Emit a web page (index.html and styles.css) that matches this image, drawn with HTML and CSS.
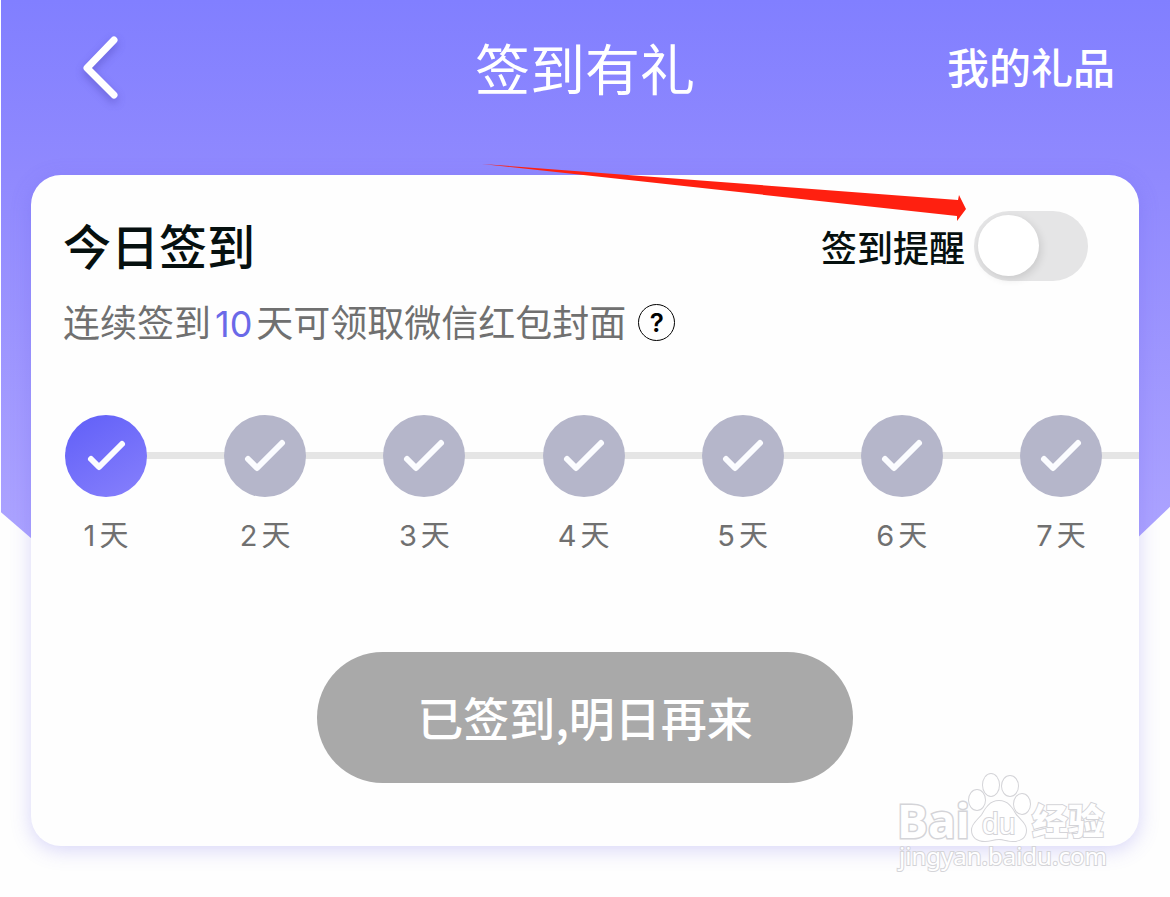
FILE: index.html
```html
<!DOCTYPE html>
<html lang="zh-CN">
<head>
    <meta charset="UTF-8">
    <meta name="viewport" content="width=device-width, initial-scale=1.0">
    <title>签到有礼</title>
    <link rel="stylesheet" href="styles.css">
</head>
<body>
    <div class="backdrop"></div>

    <header class="topbar">
        <button class="back" type="button" aria-label="返回">
            <svg width="44" height="72" viewBox="0 0 44 72" fill="none" stroke="#fff" stroke-width="7" stroke-linecap="round" stroke-linejoin="round">
                <path d="M36 8 9 36 36 63"/>
            </svg>
        </button>
        <h1>签到有礼</h1>
        <a class="gifts" href="#gifts">我的礼品</a>
    </header>

    <main class="card">
        <div class="card-head">
            <h2>今日签到</h2>
            <label class="remind">
                签到提醒
                <input class="switch" type="checkbox" role="switch">
            </label>
        </div>

        <p class="hint">
            <span>连续签到<b>10</b>天可领取微信红包封面</span>
            <button class="help" type="button" aria-label="规则说明">?</button>
        </p>

        <ol class="steps">
            <li class="step done">
                <span class="dot"><svg viewBox="0 0 82 82"><path d="M26 44 34 52 57 29"/></svg></span>
                <span class="day"><i>1</i>天</span>
            </li>
            <li class="step">
                <span class="dot"><svg viewBox="0 0 82 82"><path d="M24 44 33 53 58 28"/></svg></span>
                <span class="day"><i>2</i>天</span>
            </li>
            <li class="step">
                <span class="dot"><svg viewBox="0 0 82 82"><path d="M24 44 33 53 58 28"/></svg></span>
                <span class="day"><i>3</i>天</span>
            </li>
            <li class="step">
                <span class="dot"><svg viewBox="0 0 82 82"><path d="M24 44 33 53 58 28"/></svg></span>
                <span class="day"><i>4</i>天</span>
            </li>
            <li class="step">
                <span class="dot"><svg viewBox="0 0 82 82"><path d="M24 44 33 53 58 28"/></svg></span>
                <span class="day"><i>5</i>天</span>
            </li>
            <li class="step">
                <span class="dot"><svg viewBox="0 0 82 82"><path d="M24 44 33 53 58 28"/></svg></span>
                <span class="day"><i>6</i>天</span>
            </li>
            <li class="step">
                <span class="dot"><svg viewBox="0 0 82 82"><path d="M24 44 33 53 58 28"/></svg></span>
                <span class="day"><i>7</i>天</span>
            </li>
        </ol>

        <button class="submit" type="button">已签到,明日再来</button>

        <!-- стрілка до перемикача -->
        <svg class="arrow" width="484" height="58" viewBox="0 0 484 58">
            <path d="M0 0 476 36 477 31 484 45 475 57 475 52Z" fill="#ff2010"/>
        </svg>

        <svg class="watermark" width="220" height="108" viewBox="0 0 220 108">
            <g class="wm-shape">
                <ellipse cx="82" cy="36" rx="8" ry="10"/>
                <ellipse cx="96" cy="21" rx="8" ry="11"/>
                <ellipse cx="115" cy="22" rx="8" ry="10"/>
                <ellipse cx="127" cy="40" rx="8" ry="10"/>
                <path d="M104 37c9 0 13 7 17 14 5 6 10 9 10 15 0 8-6 11-13 11-6 0-9-2-14-2s-9 2-14 2c-8 0-13-4-13-11 0-6 6-10 10-15 4-7 8-14 17-14Z"/>
            </g>
            <text class="wm-logo" x="2" y="74">Bai</text>
            <text class="wm-du" x="87" y="70">du</text>
            <text class="wm-cn" x="137" y="71">经验</text>
            <text class="wm-url" x="4" y="101">jingyan.baidu.com</text>
        </svg>
    </main>
</body>
</html>
```

FILE: styles.css
```css
* {
    box-sizing: border-box;
    margin: 0;
    padding: 0;
}

body {
    background-color: #fefefe;
    color: #06100f;
    font-family: "Noto Sans CJK SC", sans-serif;
    overflow-x: hidden;
}

button {
    border: none;
    background: none;
    font-family: inherit;
    cursor: pointer;
}

.backdrop {
    position: absolute;
    top: 0;
    left: 1px;
    right: 0;
    height: 545px;
    z-index: -1;
    background: linear-gradient(#817fff, #9089fe 32%, #ada4ff);
    clip-path: polygon(0 0, 100% 0, 100% 93%, calc(100% - 40px) 100%, 38px 100%, 0 94%);
}

.topbar {
    display: grid;
    grid-template-columns: 1fr auto 1fr;
    align-items: center;
    height: 175px;
    padding: 0 55px 40px;
    color: #fff;
}

.back {
    justify-self: start;
    height: 72px;
    margin-left: 23px;
}

.back svg {
    display: block;
    filter: drop-shadow(0 4px 4px rgba(60, 50, 160, 0.4));
}

h1 {
    padding-bottom: 4px;
    font-size: 55px;
    font-weight: 400;
    line-height: 72px;
}

.gifts {
    justify-self: end;
    padding-bottom: 4px;
    color: #fff;
    font-size: 42px;
    font-weight: 500;
    line-height: 72px;
    text-decoration: none;
}

.card {
    position: relative;
    margin: 0 31px 51px;
    padding: 32px 0 63px;
    border-radius: 30px;
    background-color: #fefefe;
    box-shadow: 0 4px 20px rgba(100, 90, 230, 0.25);
}

.card-head {
    display: flex;
    align-items: center;
    justify-content: space-between;
    height: 78px;
    padding: 0 51px 0 32px;
}

h2 {
    padding-bottom: 4px;
    font-size: 48px;
    font-weight: 500;
}

.remind {
    display: flex;
    align-items: center;
    gap: 9px;
    font-size: 36px;
    font-weight: 500;
}

.switch {
    appearance: none;
    width: 114px;
    height: 70px;
    padding: 4px;
    border-radius: 35px;
    background-color: #e5e5e6;
    cursor: pointer;
}

.switch::before {
    content: "";
    display: block;
    width: 61px;
    height: 61px;
    border-radius: 50%;
    background-color: #fff;
    box-shadow: 2px 3px 8px rgba(0, 0, 0, 0.12);
}

.switch:checked::before {
    margin-left: auto;
}

.hint {
    display: flex;
    align-items: center;
    gap: 12px;
    height: 74px;
    padding-left: 32px;
    color: #707070;
    font-size: 37px;
    line-height: 40px;
}

.hint b {
    margin: 0 4px;
    color: #6a69e8;
    font-family: Inter, sans-serif;
    font-size: 36px;
    font-weight: 400;
}

.help {
    width: 37px;
    height: 37px;
    border: 1px solid #000;
    border-radius: 50%;
    color: #000;
    font-family: Inter, sans-serif;
    font-size: 26px;
    font-weight: 600;
    line-height: 35px;
}

.steps {
    display: flex;
    margin: 56px 0 0 34px;
    list-style: none;
}

.step {
    flex: 1;
    background: linear-gradient(#e5e5e5, #e5e5e5) 0 37px / 100% 7px no-repeat;
}

.step:last-child {
    flex: 0 0 119px;
}

.dot {
    display: block;
    width: 82px;
    height: 82px;
    border-radius: 50%;
    background-color: #b5b6ca;
}

.done .dot {
    background: linear-gradient(150deg, #605ff8, #8780fc);
}

.dot svg {
    display: block;
    fill: none;
    stroke: #fbfcff;
    stroke-width: 6;
    stroke-linecap: round;
    stroke-linejoin: round;
}

.day {
    display: flex;
    align-items: baseline;
    justify-content: center;
    gap: 4px;
    width: 82px;
    margin-top: 14px;
    color: #707070;
    font-size: 29px;
    line-height: 44px;
}

.day i {
    font-family: Inter, sans-serif;
    font-style: normal;
}

.submit {
    display: block;
    width: 536px;
    max-width: 90%;
    height: 131px;
    margin: 94px auto 0;
    padding-bottom: 4px;
    border-radius: 66px;
    background-color: #a9a9a9;
    color: #fff;
    font-size: 46px;
    font-weight: 500;
}

.arrow {
    position: absolute;
    top: -11px;
    right: 173px;
    pointer-events: none;
}

.watermark {
    position: absolute;
    right: 24px;
    bottom: -26px;
    pointer-events: none;
}

.wm-shape,
.watermark text {
    fill: #fff;
    stroke: #d4d4d8;
    stroke-width: 2;
    paint-order: stroke;
}

.watermark .wm-logo {
    font: 700 46px "Open Sans", sans-serif;
    stroke-width: 3;
}

.wm-du {
    font: 400 30px "Liberation Sans", sans-serif;
}

.wm-cn {
    font: 900 36px "Noto Sans CJK SC", sans-serif;
}

.wm-url {
    font: 400 24px "Noto Sans", sans-serif;
}
```
